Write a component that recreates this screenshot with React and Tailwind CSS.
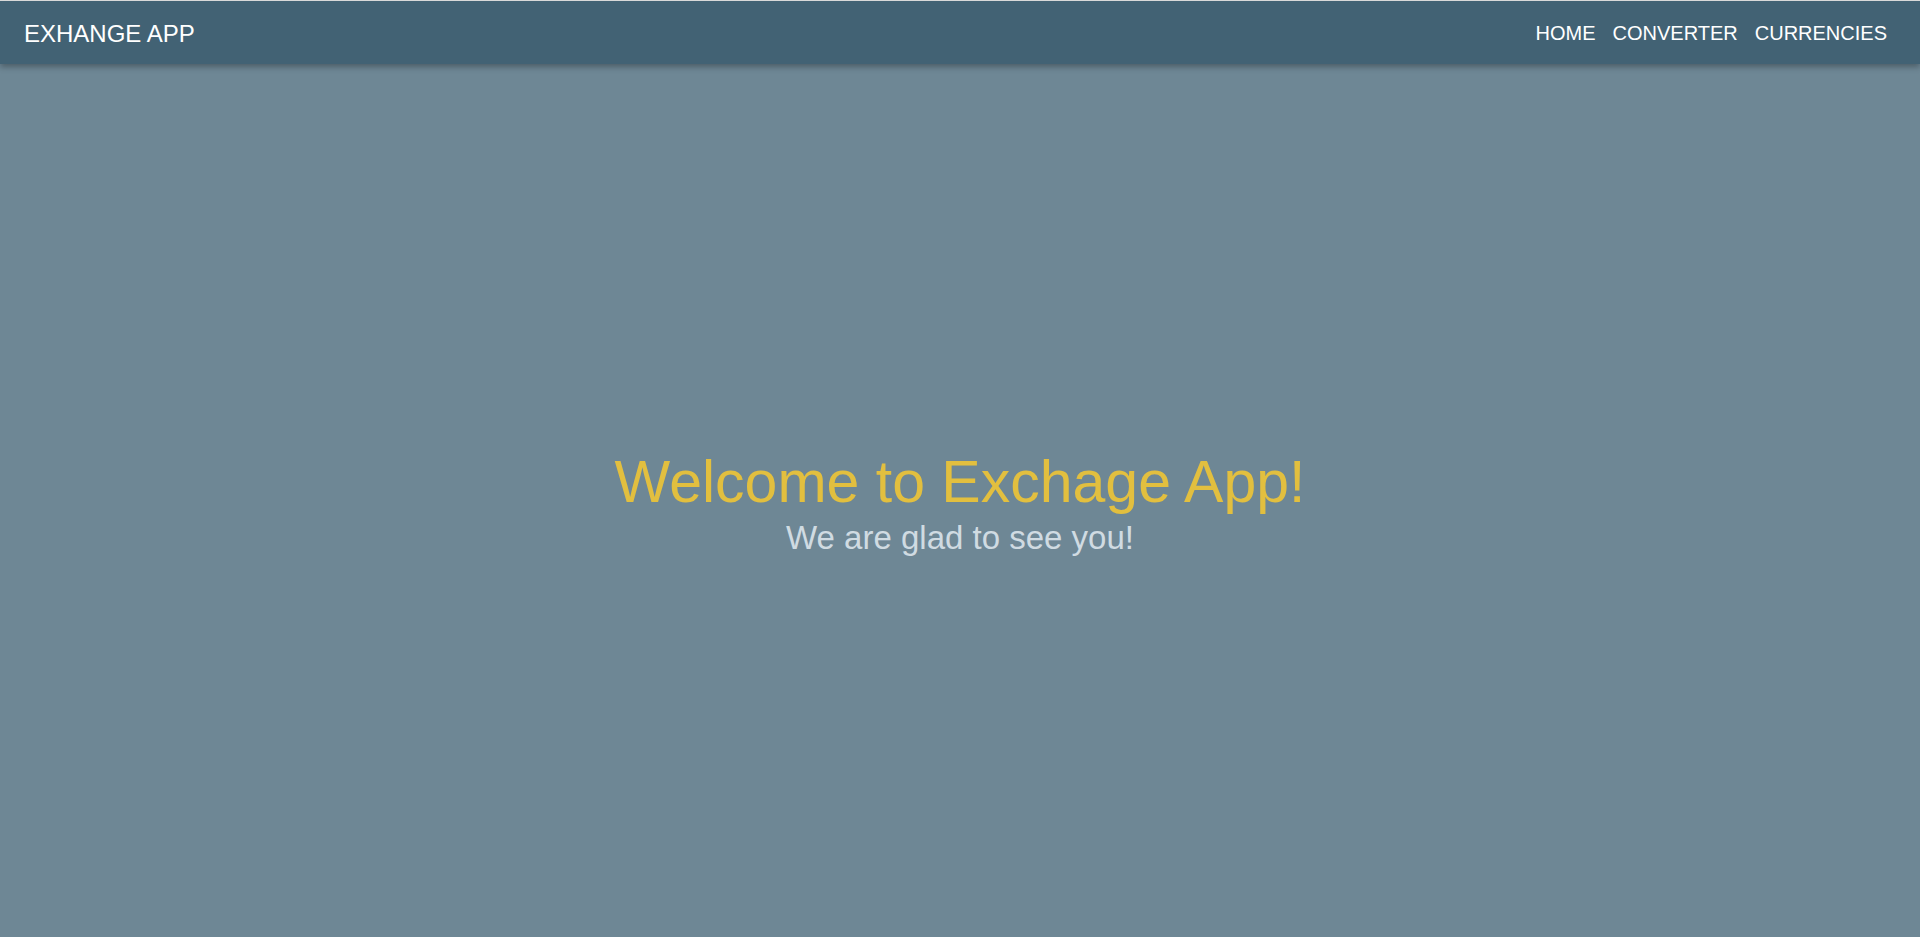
import React from "react";

const links = ["HOME", "CONVERTER", "CURRENCIES"];

const App = () => {
  return (
    <div className="min-h-screen flex flex-col bg-[#6e8795] font-['Liberation_Sans',Arial,sans-serif]">
      <header className="relative z-10 h-16 flex items-center justify-between pl-[24px] pr-[33px] bg-[#426274] border-t border-[#d9d9d9] shadow-[0_3px_6px_rgba(0,0,0,0.3)]">
        <span className="text-[24px] leading-normal text-white pt-[2px]">EXHANGE APP</span>
        <nav className="flex items-center gap-[17px]">
          {links.map((link) => (
            <a key={link} href="#" className="text-[20px] leading-normal text-white">
              {link}
            </a>
          ))}
        </nav>
      </header>
      <main className="flex-1 flex flex-col items-center justify-center pt-[5px]">
        <h1 className="text-[59px] leading-[60px] text-[#e2bf3f]">Welcome to Exchage App!</h1>
        <p className="mt-[9px] text-[33px] leading-[34px] text-[#d0dbe2]">We are glad to see you!</p>
      </main>
    </div>
  );
};

export default App;
